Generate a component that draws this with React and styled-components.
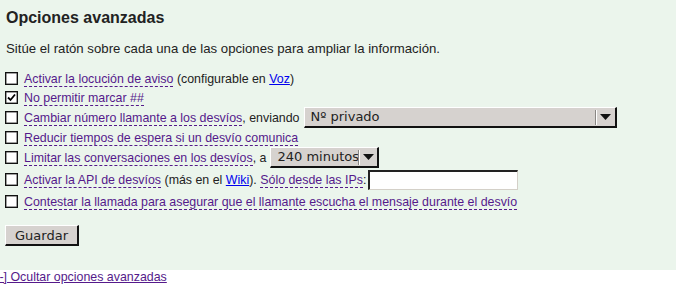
import React from 'react';
import styled, { createGlobalStyle } from 'styled-components';

const GlobalStyle = createGlobalStyle`
  body {
    margin: 0;
    background: #fff;
    font-family: "Liberation Sans", Arial, sans-serif;
    font-size: 12.4px;
    color: #222;
  }
`;

const Panel = styled.div`
  background: #ebf5ec;
  padding: 8px 6px 0;
  height: 262px;
`;

const Heading = styled.h2`
  margin: 0;
  font-size: 16px;
  font-weight: bold;
  line-height: 19px;
  color: #222;
`;

const Intro = styled.p`
  margin: 14px 0 0;
  font-size: 13.2px;
  line-height: 15px;
`;

const Options = styled.div`
  margin-top: 14px;
`;

const Row = styled.div`
  height: 19px;
  line-height: 19px;
  margin-top: ${({ $mt }) => $mt || 0}px;
  white-space: nowrap;
`;

const Box = styled.span`
  box-sizing: border-box;
  display: inline-flex;
  align-items: center;
  justify-content: center;
  vertical-align: middle;
  width: 13px;
  height: 13px;
  margin: -2px 6px 0 -1px;
  border: 1px solid #111;
  box-shadow: inset 0 0 0 0.5px #444;
  background: #fff;
`;

const Hint = styled.span`
  color: #551a8b;
  border-bottom: 1px dashed #551a8b;
  line-height: 14px;
`;

const Link = styled.a`
  color: ${({ $visited }) => ($visited ? '#551a8b' : '#0000ee')};
  text-decoration: underline;
`;

const Select = styled.span`
  box-sizing: border-box;
  display: inline-flex;
  align-items: center;
  vertical-align: middle;
  width: ${({ $w }) => $w}px;
  height: 21px;
  margin: -2px 0 0 4px;
  padding-left: 6px;
  background: #d6d2cf;
  border-top: 1px solid #fff;
  border-left: 1px solid #fff;
  border-right: 2px solid #111;
  border-bottom: 2px solid #111;
  font-family: "DejaVu Sans", Verdana, sans-serif;
  font-size: 13px;
  line-height: 16px;
  color: #222;
`;

const SelectText = styled.span`
  flex: 1;
`;

const Arrow = styled.span`
  display: flex;
  align-items: center;
  justify-content: center;
  width: 18px;
  height: 15px;
  border-left: 1px solid #fff;
  box-shadow: -1px 0 0 #8a8784;
`;

const TextBox = styled.span`
  box-sizing: border-box;
  display: inline-block;
  vertical-align: middle;
  width: 150px;
  height: 20px;
  margin: -2px 0 0 2px;
  background: #fff;
  border-top: 2px solid #222;
  border-left: 2px solid #222;
  border-right: 1px solid #d4d0c8;
  border-bottom: 1px solid #d4d0c8;
`;

const Button = styled.button`
  box-sizing: border-box;
  display: block;
  width: 74px;
  height: 21px;
  margin: 13px 0 0 -1px;
  padding: 0;
  background: #d6d2cf;
  border-top: 1px solid #fff;
  border-left: 1px solid #fff;
  border-right: 2px solid #111;
  border-bottom: 2px solid #111;
  font-family: "DejaVu Sans", Verdana, sans-serif;
  font-size: 13px;
  color: #222;
`;

const Footer = styled.div`
  margin-left: -4px;
  line-height: 14px;
`;

const Check = () => (
  <svg width="9" height="9" viewBox="0 0 9 9">
    <path d="M1 4.5 L3.5 7 L8 1.5" fill="none" stroke="#000" strokeWidth="1.8" />
  </svg>
);

const DownArrow = () => (
  <svg width="11" height="6" viewBox="0 0 11 6">
    <path d="M0 0 H11 L5.5 6 Z" fill="#111" />
  </svg>
);

const CheckBox = ({ checked }) => <Box>{checked && <Check />}</Box>;

const App = () => (
  <>
    <GlobalStyle />
    <Panel>
      <Heading>Opciones avanzadas</Heading>
      <Intro>Sitúe el ratón sobre cada una de las opciones para ampliar la información.</Intro>
      <Options>
        <Row>
          <CheckBox />
          <Hint>Activar la locución de aviso</Hint> (configurable en <Link>Voz</Link>)
        </Row>
        <Row>
          <CheckBox checked />
          <Hint>No permitir marcar ##</Hint>
        </Row>
        <Row $mt={1}>
          <CheckBox />
          <Hint>Cambiar número llamante a los desvíos</Hint>, enviando
          <Select $w={313}>
            <SelectText>Nº privado</SelectText>
            <Arrow><DownArrow /></Arrow>
          </Select>
        </Row>
        <Row $mt={1}>
          <CheckBox />
          <Hint>Reducir tiempos de espera si un desvío comunica</Hint>
        </Row>
        <Row $mt={1}>
          <CheckBox />
          <Hint>Limitar las conversaciones en los desvíos</Hint>, a
          <Select $w={109}>
            <SelectText>240 minutos</SelectText>
            <Arrow><DownArrow /></Arrow>
          </Select>
        </Row>
        <Row $mt={3}>
          <CheckBox />
          <Hint>Activar la API de desvíos</Hint> (más en el <Link>Wiki</Link>).{' '}
          <Hint>Sólo desde las IPs</Hint>:
          <TextBox />
        </Row>
        <Row $mt={3}>
          <CheckBox />
          <Hint>Contestar la llamada para asegurar que el llamante escucha el mensaje durante el desvío</Hint>
        </Row>
      </Options>
      <Button>Guardar</Button>
    </Panel>
    <Footer>
      <Link $visited>[-] Ocultar opciones avanzadas</Link>
    </Footer>
  </>
);

export default App;
